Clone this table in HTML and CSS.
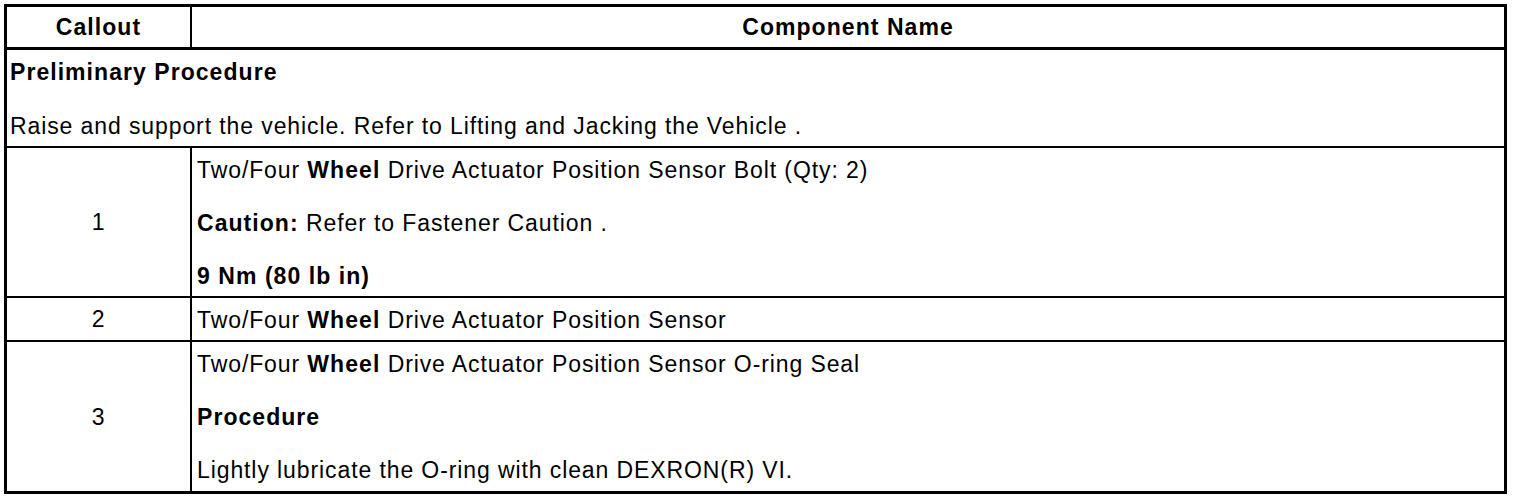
FILE: index.html
```html
<!DOCTYPE html>
<html lang="en">
<head>
<meta charset="utf-8">
<title>Component table</title>
<link rel="stylesheet" href="styles.css">
</head>
<body>
<table class="parts">
  <thead>
    <tr>
      <th class="num head">Callout</th>
      <th class="name head">Component Name</th>
    </tr>
  </thead>
  <tbody>
    <tr>
      <td class="pre" colspan="2">
        <p class="b">Preliminary Procedure</p>
        <p>Raise and support the vehicle. Refer to Lifting and Jacking the Vehicle .</p>
      </td>
    </tr>
    <tr>
      <td class="num">1</td>
      <td class="name">
        <p>Two/Four <b>Wheel</b> Drive Actuator Position Sensor Bolt (Qty: 2)</p>
        <p><b>Caution:</b> Refer to Fastener Caution .</p>
        <p class="b">9 Nm (80 lb in)</p>
      </td>
    </tr>
    <tr>
      <td class="num">2</td>
      <td class="name">
        <p>Two/Four <b>Wheel</b> Drive Actuator Position Sensor</p>
      </td>
    </tr>
    <tr class="last">
      <td class="num">3</td>
      <td class="name">
        <p>Two/Four <b>Wheel</b> Drive Actuator Position Sensor O-ring Seal</p>
        <p class="b">Procedure</p>
        <p>Lightly lubricate the O-ring with clean DEXRON(R) VI.</p>
      </td>
    </tr>
  </tbody>
</table>
</body>
</html>
```

FILE: styles.css
```css
html, body {
  margin: 0;
  padding: 0;
  background: #fff;
}

body {
  padding: 4px;
  font-family: "Liberation Sans", Arial, Helvetica, sans-serif;
  font-size: 23px;
  line-height: 24px;
  color: #000;
  letter-spacing: 0.9px;
}

.parts {
  width: 1503px;
  border: 3px solid #000;
  border-spacing: 0;
  border-collapse: separate;
}

.parts th,
.parts td {
  padding: 0;
  text-align: left;
  vertical-align: top;
  border-bottom: 2px solid #000;
}

.parts .last td {
  border-bottom: none;
}

.parts th {
  font-weight: bold;
  letter-spacing: 1.05px;
  height: 40px;
  vertical-align: middle;
  text-align: center;
  border-bottom: 3px solid #000;
  padding: 0;
}

.parts .num {
  width: 183px;
  border-right: 2px solid #000;
  text-align: center;
  vertical-align: middle;
}

.parts td.name {
  padding: 10px 4px 8px 5px;
}

.parts .last td.name {
  padding-bottom: 9px;
}

.parts td.pre {
  padding: 10px 3px 8px 3px;
}

.parts p {
  margin: 0;
}

.parts td.name p + p {
  margin-top: 29px;
}

.parts td.pre p + p {
  margin-top: 30px;
}

.b,
b {
  font-weight: bold;
  letter-spacing: 1.05px;
}
```
